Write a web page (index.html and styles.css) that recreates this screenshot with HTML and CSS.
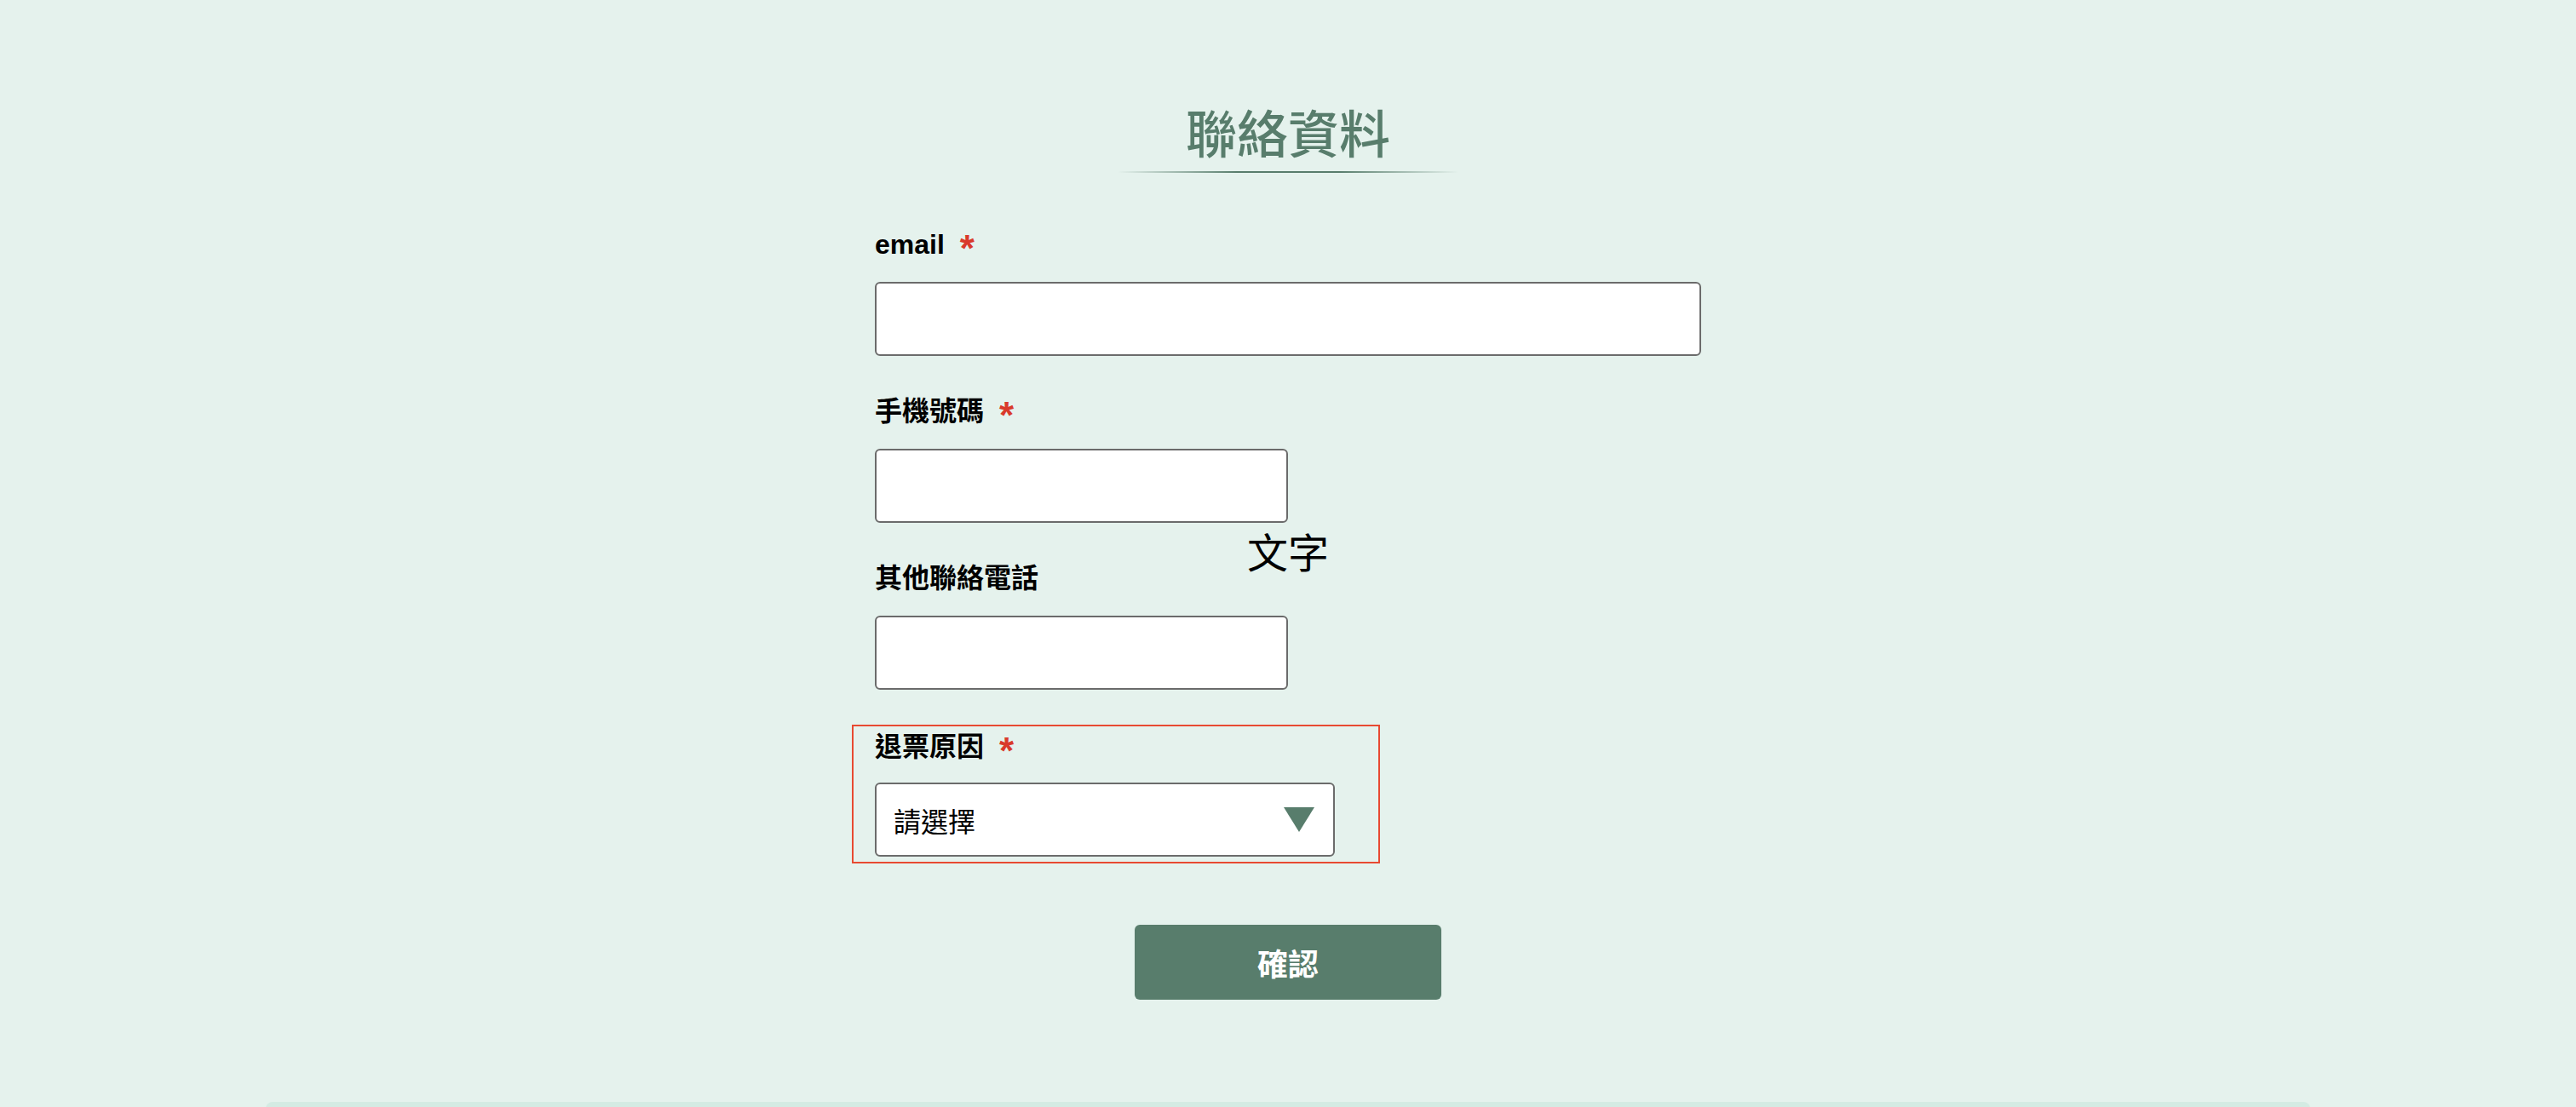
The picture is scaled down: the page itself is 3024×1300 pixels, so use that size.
FILE: index.html
```html
<!DOCTYPE html>
<html lang="zh-Hant">
<head>
    <meta charset="UTF-8">
    <meta name="viewport" content="width=device-width, initial-scale=1.0">
    <title>聯絡資料</title>
    <link rel="stylesheet" href="styles.css">
</head>
<body>
    <div class="page">
        <h2 class="title">聯絡資料</h2>
        <div class="title-line"></div>

        <form class="contact-form" onsubmit="return false">
            <div class="field">
                <label class="field-label">email<span class="req">*</span></label>
                <input class="text-input" type="text">
            </div>

            <div class="field">
                <label class="field-label">手機號碼<span class="req">*</span></label>
                <input class="text-input half" type="text">
            </div>

            <div class="field">
                <label class="field-label">其他聯絡電話</label>
                <input class="text-input half" type="text">
            </div>

            <div class="field field-error">
                <label class="field-label">退票原因<span class="req">*</span></label>
                <div class="select-box">
                    <span>請選擇</span>
                    <svg class="select-arrow" width="36" height="29" viewBox="0 0 36 29">
                        <polygon points="0,0 36,0 18,29" fill="#587d6c"/>
                    </svg>
                </div>
            </div>

            <div class="actions">
                <button class="submit-btn" type="submit">確認</button>
            </div>
        </form>

        <p class="floating-text">文字</p>
        <div class="footer-band"></div>
    </div>
</body>
</html>
```

FILE: styles.css
```css
body {
    margin: 0;
    background-color: #e5f2ed;
    font-family: "Liberation Sans", "Noto Sans CJK TC", sans-serif;
    color: #000;
}
.page {
    position: relative;
    padding-top: 109px;
}
.title {
    margin: 0;
    text-align: center;
    font-family: "Noto Sans CJK TC", sans-serif;
    font-size: 60px;
    line-height: 90px;
    font-weight: 500;
    color: #587d6c;
}
.title-line {
    width: 400px;
    height: 2px;
    margin: 2px auto 0;
    background: linear-gradient(to right, rgba(88, 125, 108, 0), #587d6c 35%, #587d6c 65%, rgba(88, 125, 108, 0));
}
.contact-form {
    width: 970px;
    margin: 60px auto 0;
}
.field {
    margin-bottom: 41px;
}
.field-label {
    display: block;
    font-size: 32px;
    line-height: 48px;
    font-weight: 700;
    margin-bottom: 20px;
}
.req {
    color: #d93a2b;
    font-size: 44px;
    line-height: 0;
    margin-left: 18px;
    vertical-align: -9px;
}
.text-input {
    display: block;
    box-sizing: border-box;
    width: 100%;
    height: 87px;
    border: 2px solid #6b6b6b;
    border-radius: 6px;
    background-color: #fff;
    font-size: 32px;
    padding: 0 20px;
}
.text-input.half {
    width: 485px;
}
.field-error {
    width: 540px;
    margin-left: -27px;
    padding: 0 51px 6px 25px;
    border: 2px solid #e84a32;
}
.field-error .field-label {
    margin-bottom: 18px;
}
.select-box {
    display: flex;
    align-items: center;
    justify-content: space-between;
    box-sizing: border-box;
    width: 540px;
    height: 87px;
    padding: 0 22px 0 20px;
    border: 2px solid #6b6b6b;
    border-radius: 6px;
    background-color: #fff;
    font-family: "Noto Sans CJK TC", sans-serif;
    font-size: 32px;
    cursor: pointer;
}
.actions {
    display: flex;
    justify-content: center;
    padding-top: 31px;
}
.submit-btn {
    width: 360px;
    height: 88px;
    border: none;
    border-radius: 6px;
    background-color: #587d6c;
    color: #fff;
    font-family: "Noto Sans CJK TC", sans-serif;
    font-size: 36px;
    font-weight: 700;
    cursor: pointer;
}
.floating-text {
    position: absolute;
    top: 622px;
    left: 0;
    right: 0;
    margin: 0;
    text-align: center;
    font-family: "Noto Sans CJK TC", sans-serif;
    font-size: 48px;
    line-height: 48px;
}
.footer-band {
    width: 2400px;
    height: 40px;
    margin: 120px auto 0;
    border-radius: 8px 8px 0 0;
    background-color: #d4ebe3;
}
```
